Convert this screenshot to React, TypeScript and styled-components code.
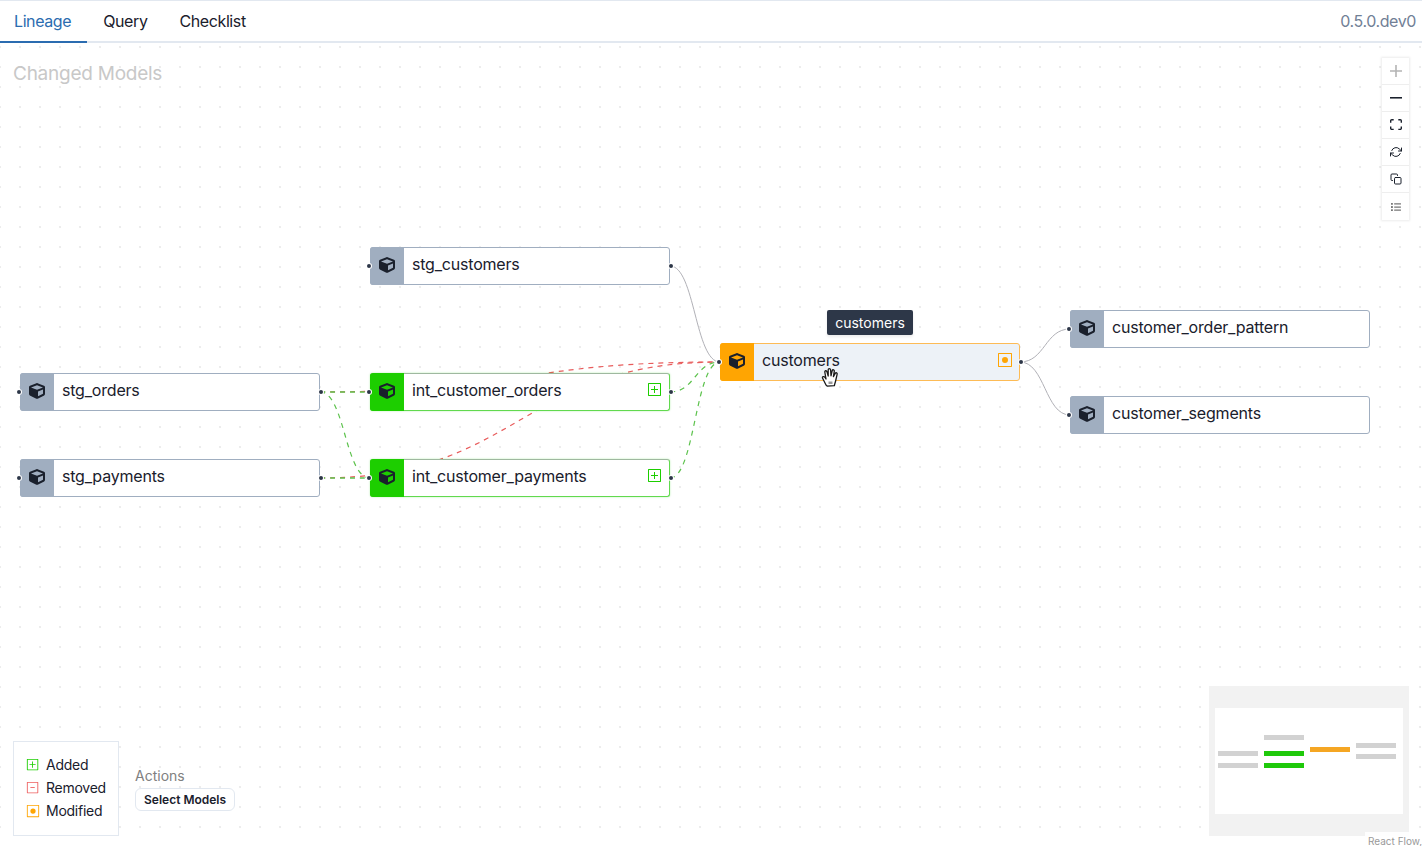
import React from "react";
import styled, { createGlobalStyle } from "styled-components";
import { FaCube, FaList } from "react-icons/fa";
import { FiCopy, FiRefreshCw } from "react-icons/fi";
import { VscDiffAdded, VscDiffModified, VscDiffRemoved } from "react-icons/vsc";

type Change = "added" | "removed" | "modified";
type Tone = Change | "none";

interface NodeData {
  name: string;
  x: number;
  y: number;
  tone: Tone;
  hovered?: boolean;
  leaf?: boolean;
}

const CANVAS_TOP = 43;

const toneColors: Record<Tone, string> = {
  added: "#1dce00",
  removed: "#ee5f5f",
  modified: "#ffa502",
  none: "#a0aec0",
};

const borderColors: Record<Tone, string> = {
  added: "#62d94f",
  removed: "#ee5f5f",
  modified: "#fdbb55",
  none: "#a0aec0",
};

const nodes: NodeData[] = [
  { name: "stg_customers", x: 370, y: 247, tone: "none" },
  { name: "stg_orders", x: 20, y: 373, tone: "none" },
  { name: "stg_payments", x: 20, y: 459, tone: "none" },
  { name: "int_customer_orders", x: 370, y: 373, tone: "added" },
  { name: "int_customer_payments", x: 370, y: 459, tone: "added" },
  { name: "customers", x: 720, y: 343, tone: "modified", hovered: true },
  { name: "customer_order_pattern", x: 1070, y: 310, tone: "none", leaf: true },
  { name: "customer_segments", x: 1070, y: 396, tone: "none", leaf: true },
];

const curve = (x1: number, y1: number, x2: number, y2: number) => {
  const mid = (x1 + x2) / 2;
  return `M${x1},${y1 - CANVAS_TOP} C${mid},${y1 - CANVAS_TOP} ${mid},${y2 - CANVAS_TOP} ${x2},${y2 - CANVAS_TOP}`;
};

const edges = [
  { d: curve(670, 266, 720, 362), color: "#b1b1b7", dashed: false, width: 1 },
  { d: curve(1020, 362, 1070, 329), color: "#b1b1b7", dashed: false, width: 1 },
  { d: curve(1020, 362, 1070, 415), color: "#b1b1b7", dashed: false, width: 1 },
  { d: curve(320, 392, 720, 362), color: "#e85c5c", dashed: true, width: 1.2 },
  { d: curve(320, 478, 720, 362), color: "#e85c5c", dashed: true, width: 1.2 },
  { d: curve(320, 392, 370, 392), color: "#5cc24c", dashed: true, width: 1.6 },
  { d: curve(320, 392, 370, 478), color: "#5cc24c", dashed: true, width: 1.2 },
  { d: curve(320, 478, 370, 478), color: "#5cc24c", dashed: true, width: 1.6 },
  { d: curve(670, 392, 720, 362), color: "#5cc24c", dashed: true, width: 1.2 },
  { d: curve(670, 478, 720, 362), color: "#5cc24c", dashed: true, width: 1.2 },
];

const miniBars = [
  { x: 9, y: 65, fill: "#d2d2d2" },
  { x: 9, y: 77, fill: "#d2d2d2" },
  { x: 55, y: 49, fill: "#d2d2d2" },
  { x: 55, y: 65, fill: "#1fc90a" },
  { x: 55, y: 77, fill: "#1fc90a" },
  { x: 101, y: 61, fill: "#f5a623" },
  { x: 147, y: 57, fill: "#d2d2d2" },
  { x: 147, y: 68, fill: "#d2d2d2" },
];

const GlobalStyle = createGlobalStyle`
  html, body {
    margin: 0;
    padding: 0;
    height: 100%;
    overflow: hidden;
    background: #ffffff;
    font-family: Inter, "Liberation Sans", sans-serif;
    color: #1a202c;
  }
  #root {
    height: 100%;
  }
`;

const Page = styled.div`
  display: flex;
  flex-direction: column;
  height: 846px;
  width: 1422px;
  border-top: 1px solid #e2e8f0;
  box-sizing: border-box;
`;

const TabBar = styled.div`
  display: flex;
  align-items: stretch;
  height: 42px;
  flex: none;
  box-sizing: border-box;
  border-bottom: 2px solid #e2e8f0;
`;

const Tab = styled.div<{ $active?: boolean }>`
  display: flex;
  align-items: center;
  padding: 0 16px;
  margin-bottom: -2px;
  font-size: 16px;
  line-height: 24px;
  letter-spacing: -0.4px;
  color: ${(props) => (props.$active ? "#2b6cb0" : "#1a202c")};
  border-bottom: 2px solid ${(props) => (props.$active ? "#2b6cb0" : "transparent")};

  &:first-child {
    padding-left: 14px;
  }
`;

const Version = styled.div`
  margin-left: auto;
  padding-right: 6px;
  align-self: center;
  font-size: 16px;
  letter-spacing: -0.4px;
  color: #718096;
`;

const Canvas = styled.div`
  position: relative;
  flex: 1;
  overflow: hidden;
  background-color: #ffffff;
  background-image: radial-gradient(circle, #ececec 0.7px, transparent 1px);
  background-size: 20px 20px;
  background-position: 10px 14px;
`;

const Title = styled.div`
  position: absolute;
  left: 13px;
  top: 19px;
  font-size: 19px;
  line-height: 24px;
  letter-spacing: -0.25px;
  color: #c8c8c8;
`;

const EdgeLayer = styled.svg`
  position: absolute;
  inset: 0;
  width: 100%;
  height: 100%;
`;

const NodeBox = styled.div<{ $x: number; $y: number; $tone: Tone; $hovered?: boolean }>`
  position: absolute;
  left: ${(props) => props.$x}px;
  top: ${(props) => props.$y - CANVAS_TOP}px;
  display: flex;
  width: 300px;
  height: 38px;
  box-sizing: border-box;
  border: 1px solid ${(props) => borderColors[props.$tone]};
  border-top-color: ${(props) => (props.$tone === "added" ? "#9fb8a0" : borderColors[props.$tone])};
  border-radius: 3px;
  background: ${(props) => (props.$hovered ? "#edf2f7" : "#ffffff")};
  box-shadow: ${(props) => (props.$tone === "added" ? "0 0 2px rgba(29, 206, 0, 0.35)" : "none")};
`;

const NodeIcon = styled.div<{ $tone: Tone }>`
  display: flex;
  align-items: center;
  justify-content: center;
  width: 34px;
  margin: -1px 0 -1px -1px;
  padding-bottom: 3px;
  box-sizing: border-box;
  flex: none;
  border-radius: 3px 0 0 3px;
  background: ${(props) => toneColors[props.$tone]};
  color: #1a202c;
  font-size: 16px;
`;

const NodeName = styled.div`
  flex: 1;
  padding-left: 8px;
  font-size: 16px;
  line-height: 32px;
  letter-spacing: -0.2px;
  color: #1a202c;
`;

const ChangeMark = styled.div<{ $tone: Tone }>`
  display: flex;
  align-items: center;
  padding: 0 6px 4px 0;
  font-size: 16px;
  color: ${(props) => toneColors[props.$tone]};
`;

const Handle = styled.span<{ $side: "left" | "right" }>`
  position: absolute;
  top: 16px;
  ${(props) => props.$side}: -4px;
  width: 4px;
  height: 4px;
  border-radius: 50%;
  background: #2d3748;
  box-shadow: 0 0 0 1px #ffffff;
`;

const Tooltip = styled.div`
  position: absolute;
  left: 827px;
  top: ${310 - CANVAS_TOP}px;
  width: 86px;
  height: 25px;
  display: flex;
  align-items: center;
  justify-content: center;
  border-radius: 2px;
  background: #2d3748;
  color: #ffffff;
  font-size: 14px;
  box-shadow: 0 2px 3px rgba(0, 0, 0, 0.08);
`;

const Cursor = styled.svg`
  position: absolute;
  left: 821px;
  top: ${367 - CANVAS_TOP}px;
  width: 19px;
  height: 21px;
`;

const Controls = styled.div`
  position: absolute;
  top: 15px;
  right: 13px;
  display: flex;
  flex-direction: column;
  background: #ffffff;
  box-shadow: 0 0 2px 1px rgba(0, 0, 0, 0.08);
`;

const ControlButton = styled.div<{ $tint?: string }>`
  display: flex;
  align-items: center;
  justify-content: center;
  width: 27px;
  height: 27px;
  box-sizing: border-box;
  border-bottom: 1px solid #eeeeee;
  color: ${(props) => props.$tint || "#1a202c"};
  font-size: 12px;

  &:last-child {
    border-bottom: none;
  }
`;

const ControlIcon = styled.svg<{ $w: number }>`
  width: ${(props) => props.$w}px;
  fill: currentColor;
`;

const ListGlyph = styled(FaList)`
  font-size: 10px;
`;

const BottomPanel = styled.div`
  position: absolute;
  left: 13px;
  bottom: 10px;
  display: flex;
  align-items: flex-end;
  gap: 16px;
`;

const Legend = styled.div`
  display: flex;
  flex-direction: column;
  gap: 3px;
  width: 106px;
  height: 95px;
  box-sizing: border-box;
  padding: 13px;
  border: 1px solid #e2e8f0;
  background: #ffffff;
`;

const LegendRow = styled.div`
  display: flex;
  align-items: center;
  gap: 6px;
  font-size: 14px;
  line-height: 20px;
  letter-spacing: -0.25px;
  color: #1a202c;
`;

const LegendIcon = styled.span<{ $tone: Tone }>`
  display: flex;
  margin-left: -1px;
  font-size: 14px;
  color: ${(props) => toneColors[props.$tone]};
`;

const Actions = styled.div`
  display: flex;
  flex-direction: column;
  gap: 2px;
  padding-bottom: 25px;
`;

const ActionsLabel = styled.div`
  font-size: 14px;
  line-height: 20px;
  color: #808080;
`;

const ActionButton = styled.div`
  display: flex;
  align-items: center;
  height: 23px;
  box-sizing: border-box;
  padding: 0 8px;
  border: 1px solid #e2e8f0;
  border-radius: 6px;
  background: #ffffff;
  font-size: 12px;
  font-weight: 600;
  color: #1a202c;
`;

const MiniMap = styled.svg`
  position: absolute;
  right: 13px;
  bottom: 10px;
  width: 200px;
  height: 150px;
`;

const Attribution = styled.div`
  position: absolute;
  right: 0;
  bottom: 0;
  height: 14px;
  width: 57px;
  padding-left: 3px;
  box-sizing: border-box;
  overflow: hidden;
  white-space: nowrap;
  background: rgba(255, 255, 255, 0.9);
  font-size: 10px;
  line-height: 18px;
  color: #999999;
`;

const diffIcon = (tone: Tone) => {
  if (tone === "added") return <VscDiffAdded />;
  if (tone === "modified") return <VscDiffModified />;
  if (tone === "removed") return <VscDiffRemoved />;
  return null;
};

const App = () => (
  <>
    <GlobalStyle />
    <Page>
      <TabBar>
        <Tab $active>Lineage</Tab>
        <Tab>Query</Tab>
        <Tab>Checklist</Tab>
        <Version>0.5.0.dev0</Version>
      </TabBar>
      <Canvas>
        <Title>Changed Models</Title>
        <EdgeLayer>
          {edges.map((edge, i) => (
            <path
              key={i}
              d={edge.d}
              fill="none"
              stroke={edge.color}
              strokeWidth={edge.width}
              strokeDasharray={edge.dashed ? "5 5" : undefined}
            />
          ))}
        </EdgeLayer>
        {nodes.map((node) => (
          <NodeBox key={node.name} $x={node.x} $y={node.y} $tone={node.tone} $hovered={node.hovered}>
            <Handle $side="left" />
            <NodeIcon $tone={node.tone}>
              <FaCube />
            </NodeIcon>
            <NodeName>{node.name}</NodeName>
            {node.tone !== "none" && <ChangeMark $tone={node.tone}>{diffIcon(node.tone)}</ChangeMark>}
            {!node.leaf && <Handle $side="right" />}
          </NodeBox>
        ))}
        <Tooltip>customers</Tooltip>
        <Cursor viewBox="0 0 19 21">
          <path
            d="M5 18 L1.5 11 C1 9.5 3 9 4 10.5 L5 12 L3.8 5 C3.6 3.5 5.6 3.2 6 4.8 L7.2 9 L7.2 2.8 C7.2 1.2 9.4 1.2 9.6 2.8 L10 8.8 L11.2 3.6 C11.6 2.2 13.6 2.6 13.3 4.2 L12.4 9.6 L14.2 6.4 C15 5.2 16.6 6 16.1 7.4 L14.6 14 C14.2 16 13.6 17 13.4 18.6 L6.4 19.2 Z"
            fill="#ffffff"
            stroke="#1a1a1a"
            strokeWidth={1.3}
            strokeLinejoin="round"
          />
          <path d="M7.5 14.5h4v2.5h-4z" fill="#9a9a9a" />
        </Cursor>
        <Controls>
          <ControlButton $tint="#b4b4b4">
            <ControlIcon $w={12} viewBox="0 0 32 32">
              <path d="M32 18.133H18.133V32h-4.266V18.133H0v-4.266h13.867V0h4.266v13.867H32z" />
            </ControlIcon>
          </ControlButton>
          <ControlButton>
            <ControlIcon $w={12} viewBox="0 0 32 5">
              <path d="M0 0h32v4.2H0z" />
            </ControlIcon>
          </ControlButton>
          <ControlButton>
            <ControlIcon $w={12} viewBox="0 0 32 30">
              <path d="M3.692 4.63c0-.53.4-.938.939-.938h5.215V0H4.708C2.13 0 0 2.054 0 4.63v5.216h3.692V4.631zM27.354 0h-5.2v3.692h5.17c.53 0 .984.4.984.939v5.215H32V4.631A4.624 4.624 0 0027.354 0zm.954 24.83c0 .532-.4.94-.939.94h-5.215v3.768h5.215c2.577 0 4.631-2.13 4.631-4.707v-5.139h-3.692v5.139zm-23.677.94c-.531 0-.939-.4-.939-.94v-5.138H0v5.139c0 2.577 2.13 4.707 4.708 4.707h5.138V25.77H4.631z" />
            </ControlIcon>
          </ControlButton>
          <ControlButton>
            <FiRefreshCw />
          </ControlButton>
          <ControlButton>
            <FiCopy />
          </ControlButton>
          <ControlButton $tint="#777777">
            <ListGlyph />
          </ControlButton>
        </Controls>
        <BottomPanel>
          <Legend>
            {(["added", "removed", "modified"] as Change[]).map((tone) => (
              <LegendRow key={tone}>
                <LegendIcon $tone={tone}>{diffIcon(tone)}</LegendIcon>
                {tone[0].toUpperCase() + tone.slice(1)}
              </LegendRow>
            ))}
          </Legend>
          <Actions>
            <ActionsLabel>Actions</ActionsLabel>
            <ActionButton>Select Models</ActionButton>
          </Actions>
        </BottomPanel>
        <MiniMap viewBox="0 0 200 150">
          <rect width="200" height="150" fill="#f2f2f2" />
          <rect x="6" y="22" width="188" height="106" fill="#ffffff" />
          {miniBars.map((bar, i) => (
            <rect key={i} x={bar.x} y={bar.y} width="40" height="5" fill={bar.fill} />
          ))}
        </MiniMap>
        <Attribution>React Flow,</Attribution>
      </Canvas>
    </Page>
  </>
);

export default App;
